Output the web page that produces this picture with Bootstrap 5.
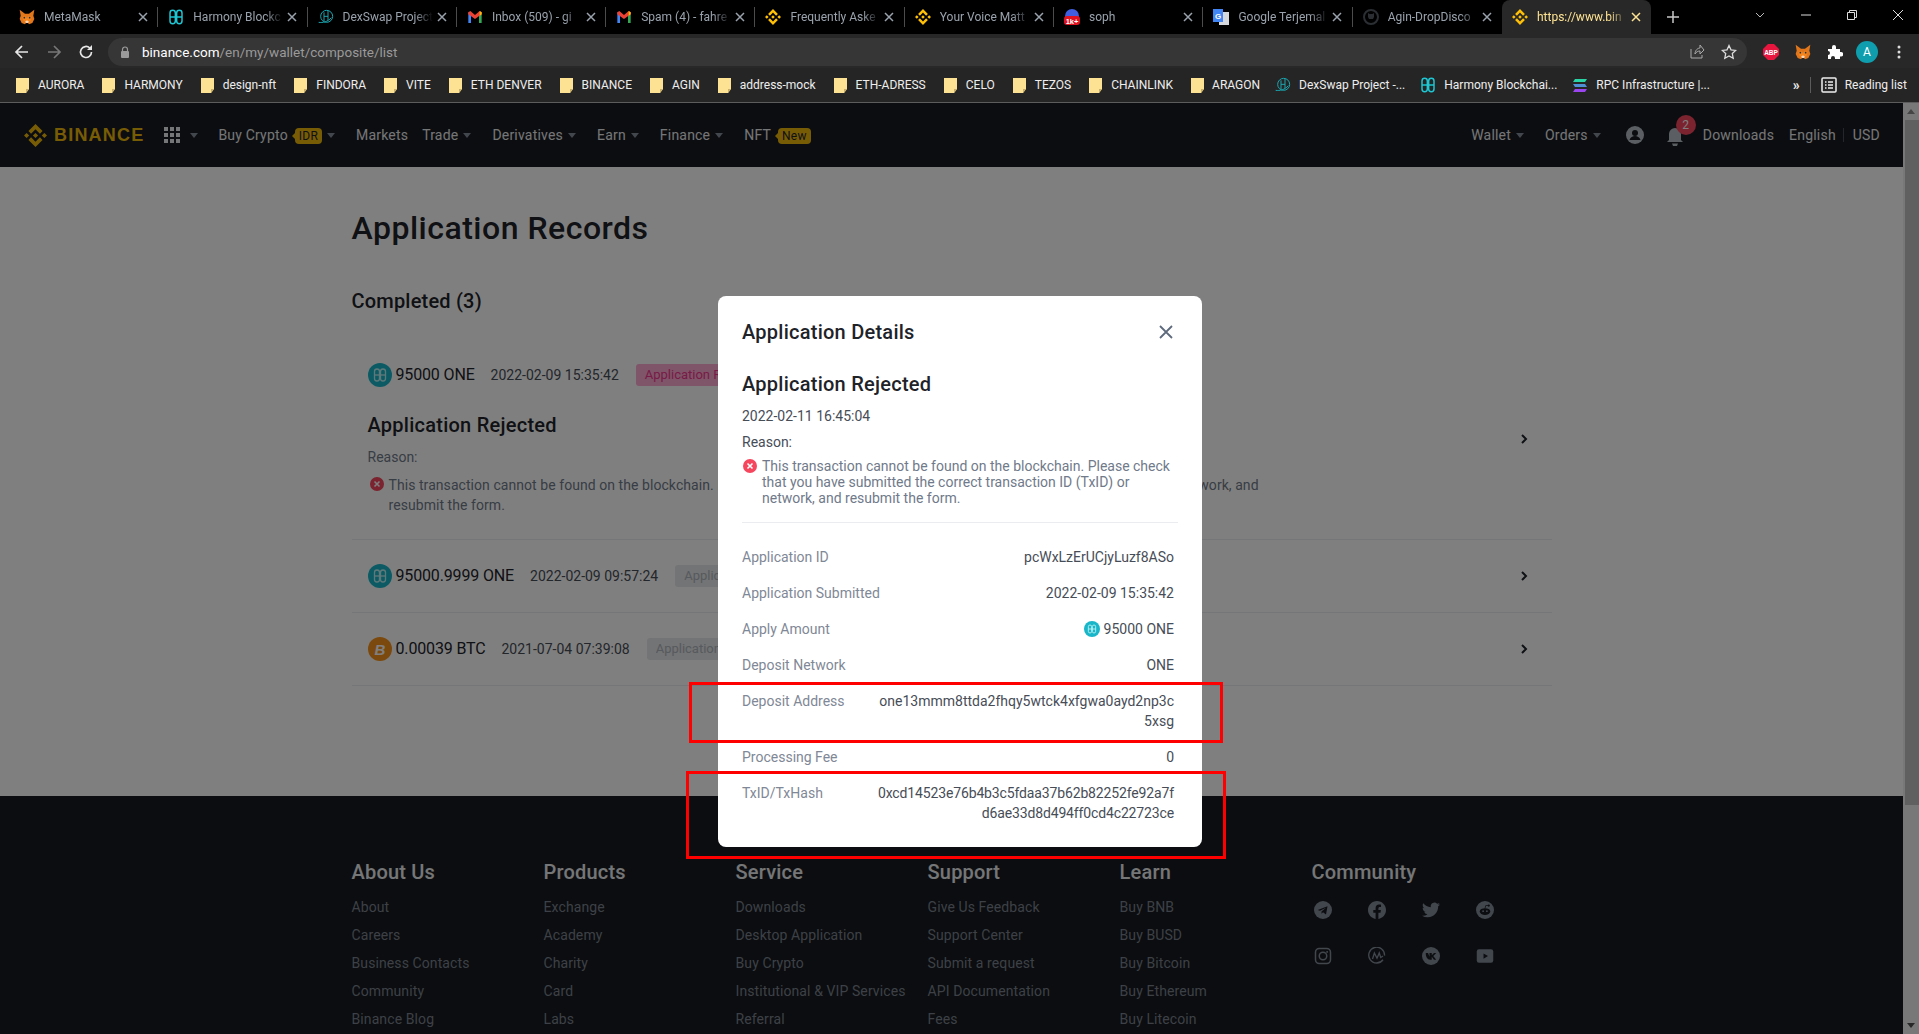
<!DOCTYPE html>
<html lang="en">
<head>
<meta charset="UTF-8">
<title>Application Records - Binance</title>
<link href="https://cdn.jsdelivr.net/npm/bootstrap@5.3.0/dist/css/bootstrap.min.css" rel="stylesheet">
<style>
    html, body { height: 1034px; overflow: hidden; }
    body { font-family: Roboto, "Liberation Sans", sans-serif; font-size: 14px; background: #000; }

    /* browser chrome */
    .tab-strip { height: 34px; background: #000; padding-left: 9px; }
    .tab-item { position: relative; width: 149.3px; height: 34px; flex: none; padding-left: 10px; color: #9aa3ad; font-size: 12px; }
    .tab-item::after { content: ""; position: absolute; right: 0; top: 7px; height: 20px; width: 1px; background: #4c4c4c; }
    .tab-item.no-sep::after { display: none; }
    .tab-item.is-active { background: #282828; border-radius: 8px 8px 0 0; color: #fde293; }
    .tab-fav { width: 16px; height: 16px; flex: none; margin-right: 9px; }
    .tab-name { width: 90px; flex: none; overflow: hidden; white-space: nowrap; -webkit-mask-image: linear-gradient(90deg, #000 80%, transparent); mask-image: linear-gradient(90deg, #000 80%, transparent); }
    .tab-x { width: 10px; height: 10px; flex: none; margin-left: 4px; }
    .tab-plus { margin-left: 14px; color: #c8c8c8; }
    .win-btns { position: absolute; top: 0; right: 0; height: 30px; }
    .win-chev { margin-right: 17px; }
    .win-btn { margin: 0 17px; }
    .win-btn.is-last { margin-right: 15px; }
    .tool-bar { height: 34px; background: #282828; padding: 4px 0 2px 14px; }
    .tool-ico { width: 16px; height: 16px; flex: none; }
    .tool-back { margin-right: 16px; }
    .url-box { width: 1639px; height: 28px; border-radius: 14px; background: #363636; margin-left: 14px; padding: 0 10px 0 12px; color: #9a9a9a; font-size: 13.5px; }
    .url-lock { margin-right: 12px; flex: none; }
    .url-box b { font-weight: 400; color: #fff; }
    .mark-bar { height: 35px; background: #252525; border-bottom: 1px solid #5c5c5c; padding-left: 16px; color: #eee; font-size: 12px; white-space: nowrap; }
    .mark-item { display: flex; align-items: center; gap: 9px; margin-right: 18px; }
    .mark-item.is-fav { gap: 8px; margin-right: 15px; }
    .folder-ico { width: 13px; height: 15px; flex: none; }
    .avatar-a { width: 22px; height: 22px; flex: none; border-radius: 50%; background: #0f9eae; color: #fff; font-size: 12px; margin-left: 13px; }
    .kebab { margin-left: 19px; }
    .mark-end { padding-right: 12px; }
    .mark-more { font-size: 14px; font-weight: 700; margin-right: 10px; }
    .mark-sep { width: 1px; height: 16px; background: #5c5c5c; margin-right: 10px; }

    /* the page */
    .view-area { height: 931px; position: relative; overflow: hidden; background: #fff; }
    .page-col { width: 1903px; flex: none; }
    .bn-nav { height: 64px; background: #181a20; color: #eaecef; padding-left: 24px; white-space: nowrap; letter-spacing: .2px; }
    .bn-logo { width: 23px; height: 23px; flex: none; color: #f0b90b; }
    .bn-word { color: #f0b90b; font-family: "Liberation Sans", sans-serif; font-weight: 700; font-size: 18px; letter-spacing: 1.2px; margin-left: 7px; }
    .nv-grid { display: grid; grid-template-columns: repeat(3, 4px); gap: 2px; margin-left: 20px; margin-right: 5px; }
    .nv-grid i { width: 4px; height: 4px; background: #eaecef; display: block; }
    .nv-caret { display: inline-block; width: 0; height: 0; border-left: 4px solid transparent; border-right: 4px solid transparent; border-top: 5px solid #848e9c; margin: 0 4px 0 5px; vertical-align: middle; }
    .nv-caret.after-grid { margin-right: 20px; }
    .nv-link { margin-right: 17px; }
    .nv-link.is-tight { margin-right: 14px; }
    .nv-tag { display: inline-block; position: relative; background: #f0b90b; color: #1e2329; font-size: 12px; line-height: 16px; padding: 0 4px; border-radius: 4px; margin-left: 7px; }
    .nv-tag::before { content: ""; position: absolute; left: -3px; top: 5px; border-top: 3px solid transparent; border-bottom: 3px solid transparent; border-right: 3px solid #f0b90b; }
    .nv-ico { width: 18px; height: 18px; flex: none; }
    .nv-user { margin-left: 4px; }
    .bell-wrap { position: relative; width: 18px; height: 18px; margin: 0 19px 0 22px; }
    .bell-count { position: absolute; top: -11px; left: 10px; width: 20px; height: 20px; line-height: 20px; text-align: center; border-radius: 50%; background: #f6465d; color: #fff; font-size: 12px; }
    .nv-sep { width: 1px; height: 14px; background: #474d57; margin-right: 9px; }
    .nv-dl { margin-right: 15px; }
    .nv-en { margin-right: 7px; }
    .nv-usd { margin-right: 23px; }

    .rec-main { height: 629px; padding-top: 41px; background: #fff; }
    .rec-wrap { width: 1200px; margin-left: 351.5px; }
    .rec-title { font-size: 32px; line-height: 40px; font-weight: 500; color: #1e2329; margin: 0 0 39px; letter-spacing: .5px; }
    .rec-sub { font-size: 20px; line-height: 28px; font-weight: 500; color: #1e2329; margin: 0 0 24px; letter-spacing: .2px; }
    .rec-row { border-bottom: 1px solid #eaecef; padding: 24px 24px 24px 16px; }
    .coin-ico { width: 24px; height: 24px; flex: none; margin-right: 4px; }
    .rec-amt { font-size: 16px; line-height: 24px; color: #1e2329; margin-right: 16px; letter-spacing: -.15px; }
    .rec-date { color: #474d57; margin-right: 17px; }
    .rec-tag { font-size: 13px; line-height: 22px; padding: 0 9px; border-radius: 3px; white-space: nowrap; background: #e6e8ea; color: #aeb4bc; }
    .rec-tag.is-bad { background: #ffaad2; color: #f0368c; }
    .rec-reason-h { font-size: 20px; line-height: 24px; font-weight: 500; color: #1e2329; margin: 26px 0 10px; letter-spacing: .25px; }
    .rec-reason-l { line-height: 20px; color: #707a8a; margin-bottom: 8px; }
    .rec-err { line-height: 20px; color: #707a8a; gap: 5px; letter-spacing: .06px; }
    .err-ico { width: 14px; height: 14px; flex: none; margin: 2px 0 0 2px; }
    .rec-chev { width: 8px; height: 12px; flex: none; }

    .bn-foot { height: 400px; background: #181a20; padding-top: 62px; }
    .foot-col { width: 192px; flex: none; }
    .foot-h { font-size: 20px; line-height: 28px; font-weight: 500; color: #eaecef; margin: 0 0 11px; letter-spacing: .2px; }
    .foot-a { line-height: 20px; margin-bottom: 8px; color: #7a828e; white-space: nowrap; letter-spacing: .1px; }
    .comm-grid { display: grid; grid-template-columns: repeat(4, 18px); column-gap: 36px; row-gap: 28px; margin: 15px 0 0 2px; }
    .comm-ico { width: 18px; height: 18px; color: #848e9c; }

    .fake-bar { width: 16px; flex: none; background: #f1f1f1; }
    .bar-up { height: 17px; }
    .bar-thumb { height: 685px; margin-left: 2px; background: #c1c1c1; }
    .bar-tri-u { width: 0; height: 0; border-left: 4px solid transparent; border-right: 4px solid transparent; border-bottom: 5px solid #8a8a8a; }
    .bar-tri-d { width: 0; height: 0; border-left: 4px solid transparent; border-right: 4px solid transparent; border-top: 5px solid #505050; }

    /* modal over the page */
    .dim-layer { position: absolute; inset: 0; z-index: 10; background: rgba(0,0,0,.5); padding-top: 193px; }
    .detail-box { width: 484px; height: 551px; background: #fff; border: 0; border-radius: 8px; margin-left: 718px; padding: 24px 24px 24px 24px; color: #474d57; }
    .detail-head { height: 24px; line-height: 24px; font-size: 20px; font-weight: 500; color: #1e2329; letter-spacing: .25px; }
    .detail-x { width: 16px; height: 16px; margin-right: 4px; }
    .detail-h { margin: 28px 0 10px; font-size: 20px; line-height: 24px; font-weight: 500; color: #1e2329; letter-spacing: .25px; }
    .detail-line { line-height: 20px; margin-bottom: 6px; }
    .detail-err { line-height: 16px; padding-bottom: 16px; border-bottom: 1px solid #eaecef; margin-bottom: 24px; color: #707a8a; gap: 5px; }
    .detail-err .err-ico { margin: 1px 0 0 1px; }
    .detail-row { line-height: 20px; margin: 0 4px 16px 0; }
    .detail-row span:first-child { color: #7f8896; }
    .detail-val { text-align: right; white-space: nowrap; }
    .detail-val.is-hash { letter-spacing: -.14px; }
    .coin-small { width: 16px; height: 16px; margin-right: 4px; vertical-align: -3px; }
    .mark-box { position: absolute; z-index: 20; border: 3px solid #f00; }
    .mark-box.is-one { left: 689px; top: 579px; width: 534px; height: 61px; }
    .mark-box.is-two { left: 686px; top: 668px; width: 540px; height: 88px; }
</style>
</head>
<body>
<svg width="0" height="0" class="position-absolute">
    <symbol id="s-bnb" viewBox="0 0 24 24"><path fill="currentColor" d="M16.624 13.9202l2.7175 2.7154-7.353 7.353-7.353-7.352 2.7175-2.7164 4.6355 4.6595 4.6356-4.6595zm4.6366-4.6366L24 12l-2.7154 2.7164L18.5682 12l2.6924-2.7164zm-9.272.001l2.7163 2.6914-2.7164 2.7174v-.001L9.2721 12l2.7164-2.7154zm-9.2722-.001L5.4088 12l-2.6914 2.6924L0 12l2.7164-2.7164zM11.9885.0115l7.353 7.329-2.7174 2.7154-4.6356-4.6356-4.6355 4.6595-2.7174-2.7154 7.353-7.353z"/></symbol>
    <symbol id="s-fox" viewBox="0 0 24 24"><path fill="#e2761b" d="M1 1l8 6h6l8-6-1.500 9 1.500 5-3 6-5 2-1.500-2h-3L9 23l-5-2-3-6 1.500-5z"/><path fill="#f6851b" d="M5 12l4-2 3 4 3-4 4 2-2 6-3 1h-4l-3-1z"/><path fill="#f5d6b8" d="M9 19l3-2 3 2-1.500 2h-3z"/><circle cx="8" cy="13" r="1.300" fill="#233447"/><circle cx="16" cy="13" r="1.300" fill="#233447"/></symbol>
    <symbol id="s-one" viewBox="0 0 24 24"><g fill="none" stroke="#1fc7d4" stroke-width="2.200"><rect x="3" y="2" width="8" height="20" rx="4"/><rect x="13" y="2" width="8" height="20" rx="4"/><path d="M3 12h18"/></g></symbol>
    <symbol id="s-dex" viewBox="0 0 24 24"><g fill="none" stroke="#1aa6b0" stroke-width="1.500"><circle cx="13" cy="11" r="9"/><path d="M9 5v13M15 3v14M9 11h6M1 20c6 1 14-1 19-7"/></g></symbol>
    <symbol id="s-gm" viewBox="0 0 24 24"><path fill="#4285f4" d="M2 5h4v16H2z"/><path fill="#34a853" d="M18 5h4v16h-4z"/><path fill="#ea4335" d="M2 5l3-2 7 6 7-6 3 2v3l-10 7L2 8z"/><path fill="#fbbc04" d="M19 3l3 2v3l-3 2z"/></symbol>
    <symbol id="s-x" viewBox="0 0 10 10"><path d="M1 1l8 8M9 1l-8 8" stroke="currentColor" stroke-width="1.500" fill="none"/></symbol>
    <symbol id="s-folder" viewBox="0 0 13 15"><path fill="#fde293" d="M0 0h13v11l-3 4H0z"/><path fill="#c9b06a" d="M10 15v-4h3z"/></symbol>
    <symbol id="s-err" viewBox="0 0 14 14"><circle cx="7" cy="7" r="7" fill="#f6465d"/><path d="M4.500 4.500l5 5M9.500 4.500l-5 5" stroke="#fff" stroke-width="1.600"/></symbol>
    <symbol id="s-chev" viewBox="0 0 8 12"><path d="M2 2l4 4-4 4" stroke="#1e2329" stroke-width="2" fill="none"/></symbol>
    <symbol id="s-coin" viewBox="0 0 24 24"><circle cx="12" cy="12" r="12" fill="#19b6c9"/><g fill="none" stroke="#bff3f5" stroke-width="1.300"><rect x="6.500" y="6" width="5" height="12" rx="2.500"/><rect x="12.500" y="6" width="5" height="12" rx="2.500"/><path d="M6.500 12h11"/></g></symbol>
</svg>

<div class="tab-strip d-flex position-relative">
    <div class="tab-item d-flex align-items-center"><svg class="tab-fav"><use href="#s-fox"/></svg><span class="tab-name">MetaMask</span><svg class="tab-x"><use href="#s-x"/></svg></div>
    <div class="tab-item d-flex align-items-center"><svg class="tab-fav"><use href="#s-one"/></svg><span class="tab-name">Harmony Blockc</span><svg class="tab-x"><use href="#s-x"/></svg></div>
    <div class="tab-item d-flex align-items-center"><svg class="tab-fav"><use href="#s-dex"/></svg><span class="tab-name">DexSwap Project</span><svg class="tab-x"><use href="#s-x"/></svg></div>
    <div class="tab-item d-flex align-items-center"><svg class="tab-fav"><use href="#s-gm"/></svg><span class="tab-name">Inbox (509) - gi</span><svg class="tab-x"><use href="#s-x"/></svg></div>
    <div class="tab-item d-flex align-items-center"><svg class="tab-fav"><use href="#s-gm"/></svg><span class="tab-name">Spam (4) - fahre</span><svg class="tab-x"><use href="#s-x"/></svg></div>
    <div class="tab-item d-flex align-items-center"><svg class="tab-fav text-warning"><use href="#s-bnb"/></svg><span class="tab-name">Frequently Aske</span><svg class="tab-x"><use href="#s-x"/></svg></div>
    <div class="tab-item d-flex align-items-center"><svg class="tab-fav text-warning"><use href="#s-bnb"/></svg><span class="tab-name">Your Voice Matt</span><svg class="tab-x"><use href="#s-x"/></svg></div>
    <div class="tab-item d-flex align-items-center"><svg class="tab-fav" viewBox="0 0 16 16"><circle cx="8" cy="7" r="7" fill="#3f5fe0"/><rect x="0" y="7" width="16" height="9" rx="3" fill="#e0121f"/><text x="8" y="14.500" text-anchor="middle" font-size="7.500" font-weight="700" fill="#fff" font-family="Liberation Sans">1k+</text></svg><span class="tab-name">soph</span><svg class="tab-x"><use href="#s-x"/></svg></div>
    <div class="tab-item d-flex align-items-center"><svg class="tab-fav" viewBox="0 0 16 16"><rect x="6" y="3" width="10" height="13" fill="#d5d8dc"/><rect x="0" y="0" width="10" height="13" fill="#4285f4"/><text x="5" y="10" text-anchor="middle" font-size="8" font-weight="700" fill="#fff" font-family="Liberation Sans">G</text></svg><span class="tab-name">Google Terjemal</span><svg class="tab-x"><use href="#s-x"/></svg></div>
    <div class="tab-item d-flex align-items-center no-sep"><svg class="tab-fav" viewBox="0 0 16 16"><circle cx="8" cy="8" r="7" fill="none" stroke="#2b2f33" stroke-width="2"/><path d="M5 4l1.500 1h3L11 4v4l-1 2H6L5 8z" fill="#2b2f33"/></svg><span class="tab-name">Agin-DropDisco</span><svg class="tab-x"><use href="#s-x"/></svg></div>
    <div class="tab-item d-flex align-items-center no-sep is-active"><svg class="tab-fav text-warning"><use href="#s-bnb"/></svg><span class="tab-name">https://www.bin</span><svg class="tab-x"><use href="#s-x"/></svg></div>
    <svg class="tool-ico align-self-center tab-plus" viewBox="0 0 16 16"><path d="M8 2v12M2 8h12" stroke="currentColor" stroke-width="1.500"/></svg>
    <div class="win-btns d-flex align-items-center">
        <svg width="12" height="12" viewBox="0 0 12 12" class="win-chev"><path d="M2 4l4 4 4-4" fill="none" stroke="#bbb"/></svg>
        <svg width="12" height="12" viewBox="0 0 12 12" class="win-btn"><path d="M1 6h10" stroke="#ddd"/></svg>
        <svg width="12" height="12" viewBox="0 0 12 12" class="win-btn"><path d="M1.500 3.500h7v7h-7zM3.500 3V1.500h7v7H9" fill="none" stroke="#ddd"/></svg>
        <svg width="12" height="12" viewBox="0 0 12 12" class="win-btn is-last"><path d="M1 1l10 10M11 1L1 11" stroke="#ddd"/></svg>
    </div>
</div>

<div class="tool-bar d-flex align-items-center">
    <svg class="tool-ico tool-back" viewBox="0 0 16 16"><path d="M14 8H2M8 2L2 8l6 6" fill="none" stroke="#e6e6e6" stroke-width="1.700"/></svg>
    <svg class="tool-ico tool-back" viewBox="0 0 16 16"><path d="M2 8h12M8 2l6 6-6 6" fill="none" stroke="#777" stroke-width="1.700"/></svg>
    <svg class="tool-ico" viewBox="0 0 16 16"><path d="M13.500 8A5.500 5.500 0 1 1 11.800 4" fill="none" stroke="#e6e6e6" stroke-width="1.700"/><path d="M14 1v5H9z" fill="#e6e6e6"/></svg>
    <div class="url-box d-flex align-items-center">
        <svg width="10" height="12" viewBox="0 0 10 12" class="url-lock"><path d="M2.500 5V3.500a2.500 2.500 0 0 1 5 0V5" fill="none" stroke="#9a9a9a" stroke-width="1.200"/><rect x="1" y="5" width="8" height="7" rx="1" fill="#9a9a9a"/></svg>
        <span><b>binance.com</b>/en/my/wallet/composite/list</span>
        <svg class="tool-ico ms-auto" viewBox="0 0 16 16"><path d="M2 5v9h11v-3M6 10c0-4 3-6 5-6V1l4 5-4 4V7c-2 0-4 1-5 3z" fill="none" stroke="#aaa"/></svg>
        <svg class="tool-ico ms-3" viewBox="0 0 16 16"><path d="M8 1.500l2 4.300 4.700.6-3.400 3.200.9 4.700L8 12l-4.200 2.300.9-4.700L1.300 6.400 6 5.800z" fill="none" stroke="#ddd" stroke-width="1.300"/></svg>
    </div>
    <svg class="tool-ico ms-3" viewBox="0 0 16 16"><path d="M5 0h6l5 5v6l-5 5H5l-5-5V5z" fill="#e8163f"/><text x="8" y="10.500" text-anchor="middle" font-size="6.500" font-weight="700" fill="#fff" font-family="Liberation Sans">ABP</text></svg>
    <svg class="tool-ico ms-3"><use href="#s-fox"/></svg>
    <svg class="tool-ico ms-3" viewBox="0 0 16 16"><path d="M1 5h4V3a2 2 0 0 1 4 0v2h4v3h1a2.200 2.200 0 0 1 0 4.500h-1V15H8v-1a2 2 0 0 0-4 0v1H1v-4a2 2 0 0 0 0-4z" fill="#fff"/></svg>
    <span class="avatar-a d-flex align-items-center justify-content-center">A</span>
    <svg width="4" height="14" viewBox="0 0 4 14" class="kebab"><circle cx="2" cy="2" r="1.500" fill="#ddd"/><circle cx="2" cy="7" r="1.500" fill="#ddd"/><circle cx="2" cy="12" r="1.500" fill="#ddd"/></svg>
</div>

<div class="mark-bar d-flex align-items-center position-relative">
    <span class="mark-item"><svg class="folder-ico"><use href="#s-folder"/></svg>AURORA</span>
    <span class="mark-item"><svg class="folder-ico"><use href="#s-folder"/></svg>HARMONY</span>
    <span class="mark-item"><svg class="folder-ico"><use href="#s-folder"/></svg>design-nft</span>
    <span class="mark-item"><svg class="folder-ico"><use href="#s-folder"/></svg>FINDORA</span>
    <span class="mark-item"><svg class="folder-ico"><use href="#s-folder"/></svg>VITE</span>
    <span class="mark-item"><svg class="folder-ico"><use href="#s-folder"/></svg>ETH DENVER</span>
    <span class="mark-item"><svg class="folder-ico"><use href="#s-folder"/></svg>BINANCE</span>
    <span class="mark-item"><svg class="folder-ico"><use href="#s-folder"/></svg>AGIN</span>
    <span class="mark-item"><svg class="folder-ico"><use href="#s-folder"/></svg>address-mock</span>
    <span class="mark-item"><svg class="folder-ico"><use href="#s-folder"/></svg>ETH-ADRESS</span>
    <span class="mark-item"><svg class="folder-ico"><use href="#s-folder"/></svg>CELO</span>
    <span class="mark-item"><svg class="folder-ico"><use href="#s-folder"/></svg>TEZOS</span>
    <span class="mark-item"><svg class="folder-ico"><use href="#s-folder"/></svg>CHAINLINK</span>
    <span class="mark-item is-fav"><svg class="folder-ico"><use href="#s-folder"/></svg>ARAGON</span>
    <span class="mark-item is-fav"><svg class="tab-fav m-0"><use href="#s-dex"/></svg>DexSwap Project -...</span>
    <span class="mark-item is-fav"><svg class="tab-fav m-0"><use href="#s-one"/></svg>Harmony Blockchai...</span>
    <span class="mark-item is-fav"><svg class="tab-fav m-0" viewBox="0 0 16 16"><path d="M3 2h12l-2 3H1z" fill="#2bd4a5"/><path d="M1 7h12l2 3H3z" fill="#4f8fd6"/><path d="M3 12h12l-2 3H1z" fill="#9b45f0"/></svg>RPC Infrastructure |...</span>
    <div class="d-flex align-items-center position-absolute end-0 top-0 h-100 mark-end">
        <span class="mark-more">&raquo;</span>
        <span class="mark-sep"></span>
        <svg class="tool-ico me-2" viewBox="0 0 16 16"><rect x="1" y="1" width="14" height="14" rx="1" fill="none" stroke="#eee" stroke-width="1.500"/><path d="M4 5h1.500M7 5h5M4 8h1.500M7 8h5M4 11h1.500M7 11h5" stroke="#eee" stroke-width="1.300"/></svg>
        Reading list
    </div>
</div>

<div class="view-area d-flex">
    <div class="page-col">
        <nav class="bn-nav d-flex align-items-center">
            <svg class="bn-logo"><use href="#s-bnb"/></svg>
            <span class="bn-word">BINANCE</span>
            <span class="nv-grid"><i></i><i></i><i></i><i></i><i></i><i></i><i></i><i></i><i></i></span>
            <span class="nv-caret after-grid"></span>
            <span class="nv-link">Buy Crypto<span class="nv-tag">IDR</span><span class="nv-caret"></span></span>
            <span class="nv-link is-tight">Markets</span>
            <span class="nv-link">Trade<span class="nv-caret"></span></span>
            <span class="nv-link">Derivatives<span class="nv-caret"></span></span>
            <span class="nv-link">Earn<span class="nv-caret"></span></span>
            <span class="nv-link">Finance<span class="nv-caret"></span></span>
            <span class="nv-link">NFT<span class="nv-tag">New</span></span>
            <span class="nv-link ms-auto">Wallet<span class="nv-caret"></span></span>
            <span class="nv-link">Orders<span class="nv-caret"></span></span>
            <svg class="nv-ico nv-user" viewBox="0 0 18 18"><circle cx="9" cy="9" r="9" fill="#b7bdc6"/><circle cx="9" cy="7" r="3" fill="#181a20"/><path d="M3.500 14c1-3 3-4 5.500-4s4.500 1 5.500 4z" fill="#181a20"/></svg>
            <span class="bell-wrap"><svg class="nv-ico" viewBox="0 0 18 18"><path d="M9 0a6 6 0 0 1 6 6v6l2 2H1l2-2V6a6 6 0 0 1 6-6z" fill="#b7bdc6"/><path d="M6 15.500h6L11 18H7z" fill="#b7bdc6"/></svg><span class="bell-count">2</span></span>
            <span class="nv-dl">Downloads</span>
            <span class="nv-en">English</span>
            <span class="nv-sep"></span>
            <span class="nv-usd">USD</span>
        </nav>

        <main class="rec-main">
            <div class="rec-wrap">
                <h1 class="rec-title">Application Records</h1>
                <h2 class="rec-sub">Completed (3)</h2>
                <div class="rec-row d-flex justify-content-between align-items-center">
                    <div>
                        <div class="d-flex align-items-center">
                            <svg class="coin-ico"><use href="#s-coin"/></svg>
                            <span class="rec-amt">95000 ONE</span>
                            <span class="rec-date">2022-02-09 15:35:42</span>
                            <span class="rec-tag is-bad">Application Rejected</span>
                        </div>
                        <div class="rec-reason-h">Application Rejected</div>
                        <div class="rec-reason-l">Reason:</div>
                        <div class="rec-err d-flex">
                            <svg class="err-ico"><use href="#s-err"/></svg>
                            <span>This transaction cannot be found on the blockchain. Please check that you have submitted the correct transaction ID (TxID) or network, and<br>resubmit the form.</span>
                        </div>
                    </div>
                    <svg class="rec-chev"><use href="#s-chev"/></svg>
                </div>
                <div class="rec-row d-flex justify-content-between align-items-center">
                    <div class="d-flex align-items-center">
                        <svg class="coin-ico"><use href="#s-coin"/></svg>
                        <span class="rec-amt">95000.9999 ONE</span>
                        <span class="rec-date">2022-02-09 09:57:24</span>
                        <span class="rec-tag">Application Completed</span>
                    </div>
                    <svg class="rec-chev"><use href="#s-chev"/></svg>
                </div>
                <div class="rec-row d-flex justify-content-between align-items-center">
                    <div class="d-flex align-items-center">
                        <svg class="coin-ico" viewBox="0 0 24 24"><circle cx="12" cy="12" r="12" fill="#f7931a"/><text x="12" y="17.500" text-anchor="middle" font-size="15" font-weight="700" font-style="italic" fill="#fff" font-family="Liberation Sans">B</text></svg>
                        <span class="rec-amt">0.00039 BTC</span>
                        <span class="rec-date">2021-07-04 07:39:08</span>
                        <span class="rec-tag">Application Completed</span>
                    </div>
                    <svg class="rec-chev"><use href="#s-chev"/></svg>
                </div>
            </div>
        </main>

        <footer class="bn-foot">
            <div class="rec-wrap d-flex">
                <div class="foot-col"><h3 class="foot-h">About Us</h3><div class="foot-a">About</div><div class="foot-a">Careers</div><div class="foot-a">Business Contacts</div><div class="foot-a">Community</div><div class="foot-a">Binance Blog</div></div>
                <div class="foot-col"><h3 class="foot-h">Products</h3><div class="foot-a">Exchange</div><div class="foot-a">Academy</div><div class="foot-a">Charity</div><div class="foot-a">Card</div><div class="foot-a">Labs</div></div>
                <div class="foot-col"><h3 class="foot-h">Service</h3><div class="foot-a">Downloads</div><div class="foot-a">Desktop Application</div><div class="foot-a">Buy Crypto</div><div class="foot-a">Institutional &amp; VIP Services</div><div class="foot-a">Referral</div></div>
                <div class="foot-col"><h3 class="foot-h">Support</h3><div class="foot-a">Give Us Feedback</div><div class="foot-a">Support Center</div><div class="foot-a">Submit a request</div><div class="foot-a">API Documentation</div><div class="foot-a">Fees</div></div>
                <div class="foot-col"><h3 class="foot-h">Learn</h3><div class="foot-a">Buy BNB</div><div class="foot-a">Buy BUSD</div><div class="foot-a">Buy Bitcoin</div><div class="foot-a">Buy Ethereum</div><div class="foot-a">Buy Litecoin</div></div>
                <div class="foot-col">
                    <h3 class="foot-h">Community</h3>
                    <div class="comm-grid">
                        <svg class="comm-ico" viewBox="0 0 24 24"><circle cx="12" cy="12" r="12" fill="currentColor"/><path d="M5 12l13-5-2 11-4-3-2 2v-3l6-5-8 4z" fill="#181a20"/></svg>
                        <svg class="comm-ico" viewBox="0 0 24 24"><path fill="currentColor" d="M24 12.073c0-6.627-5.373-12-12-12s-12 5.373-12 12c0 5.990 4.388 10.954 10.125 11.854v-8.385H7.078v-3.470h3.047V9.430c0-3.007 1.792-4.669 4.533-4.669 1.312 0 2.686.235 2.686.235v2.953H15.830c-1.491 0-1.956.925-1.956 1.874v2.250h3.328l-.532 3.470h-2.796v8.385C19.612 23.027 24 18.062 24 12.073z"/></svg>
                        <svg class="comm-ico" viewBox="0 0 24 24"><path fill="currentColor" d="M23.953 4.570a10 10 0 01-2.825.775 4.958 4.958 0 002.163-2.723c-.951.555-2.005.959-3.127 1.184a4.920 4.920 0 00-8.384 4.482C7.690 8.095 4.067 6.130 1.640 3.162a4.822 4.822 0 00-.666 2.475c0 1.710.870 3.213 2.188 4.096a4.904 4.904 0 01-2.228-.616v.060a4.923 4.923 0 003.946 4.827 4.996 4.996 0 01-2.212.085 4.936 4.936 0 004.604 3.417 9.867 9.867 0 01-6.102 2.105c-.390 0-.779-.023-1.170-.067a13.995 13.995 0 007.557 2.209c9.053 0 13.998-7.496 13.998-13.985 0-.210 0-.420-.015-.630A9.935 9.935 0 0024 4.590z"/></svg>
                        <svg class="comm-ico" viewBox="0 0 24 24"><circle cx="12" cy="12" r="12" fill="currentColor"/><ellipse cx="12" cy="14" rx="7" ry="4.500" fill="#181a20"/><circle cx="9.500" cy="13.500" r="1.200" fill="currentColor"/><circle cx="14.500" cy="13.500" r="1.200" fill="currentColor"/><circle cx="17" cy="6" r="1.500" fill="#181a20"/><path d="M12 10l1-4 4 0" fill="none" stroke="#181a20"/></svg>
                        <svg class="comm-ico" viewBox="0 0 24 24"><g fill="none" stroke="currentColor" stroke-width="2"><rect x="2" y="2" width="20" height="20" rx="5"/><circle cx="12" cy="12" r="5"/></g><circle cx="17.500" cy="6.500" r="1.300" fill="currentColor"/></svg>
                        <svg class="comm-ico" viewBox="0 0 24 24"><g fill="none" stroke="currentColor" stroke-width="1.800"><path d="M20 17a10.500 10.500 0 1 1 2-5.500"/><path d="M6 16l2.500-8L12 15l3-7 2 6 3-2"/></g></svg>
                        <svg class="comm-ico" viewBox="0 0 24 24"><circle cx="12" cy="12" r="12" fill="currentColor"/><path d="M5 8h3l2 5V8h3v3l3-3h3l-4 4 4 5h-3l-3-4v4h-2c-4 0-6-4-6-9z" fill="#181a20"/></svg>
                        <svg class="comm-ico" viewBox="0 0 24 24"><rect x="1" y="3" width="22" height="18" rx="3" fill="currentColor"/><path d="M10 8.500l6 3.500-6 3.500z" fill="#181a20"/></svg>
                    </div>
                </div>
            </div>
        </footer>
    </div>

    <div class="fake-bar d-flex flex-column">
        <div class="bar-up d-flex align-items-center justify-content-center"><span class="bar-tri-u"></span></div>
        <div class="bar-thumb"></div>
        <div class="flex-grow-1"></div>
        <div class="bar-up d-flex align-items-center justify-content-center"><span class="bar-tri-d"></span></div>
    </div>

    <div class="dim-layer">
        <div class="modal-content detail-box">
            <div class="d-flex justify-content-between align-items-center detail-head">
                <span>Application Details</span>
                <svg class="detail-x" viewBox="0 0 16 16"><path d="M2 2l12 12M14 2L2 14" stroke="#5e6a7c" stroke-width="1.800" fill="none"/></svg>
            </div>
            <div class="detail-h">Application Rejected</div>
            <div class="detail-line">2022-02-11 16:45:04</div>
            <div class="detail-line">Reason:</div>
            <div class="detail-err d-flex">
                <svg class="err-ico"><use href="#s-err"/></svg>
                <span>This transaction cannot be found on the blockchain. Please check that you have submitted the correct transaction ID (TxID) or network, and resubmit the form.</span>
            </div>
            <div class="detail-row d-flex justify-content-between"><span>Application ID</span><span class="detail-val">pcWxLzErUCjyLuzf8ASo</span></div>
            <div class="detail-row d-flex justify-content-between"><span>Application Submitted</span><span class="detail-val">2022-02-09 15:35:42</span></div>
            <div class="detail-row d-flex justify-content-between"><span>Apply Amount</span><span class="detail-val"><svg class="coin-small"><use href="#s-coin"/></svg>95000 ONE</span></div>
            <div class="detail-row d-flex justify-content-between"><span>Deposit Network</span><span class="detail-val">ONE</span></div>
            <div class="detail-row d-flex justify-content-between"><span>Deposit Address</span><span class="detail-val">one13mmm8ttda2fhqy5wtck4xfgwa0ayd2np3c<br>5xsg</span></div>
            <div class="detail-row d-flex justify-content-between"><span>Processing Fee</span><span class="detail-val">0</span></div>
            <div class="detail-row d-flex justify-content-between"><span>TxID/TxHash</span><span class="detail-val is-hash">0xcd14523e76b4b3c5fdaa37b62b82252fe92a7f<br>d6ae33d8d494ff0cd4c22723ce</span></div>
        </div>
    </div>
    <div class="mark-box is-one"></div>
    <div class="mark-box is-two"></div>
</div>
<script src="https://cdn.jsdelivr.net/npm/bootstrap@5.3.0/dist/js/bootstrap.bundle.min.js"></script>
</body>
</html>
